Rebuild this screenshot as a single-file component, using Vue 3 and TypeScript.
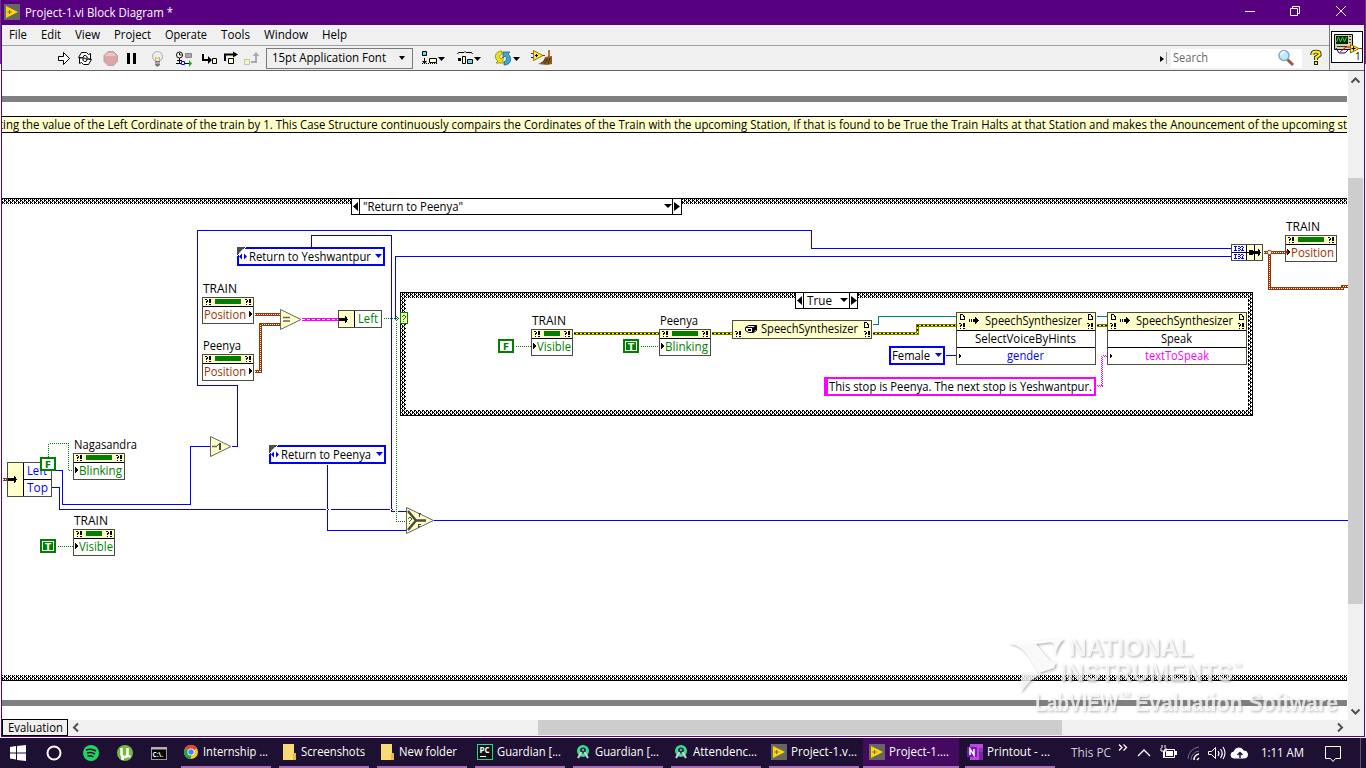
<script setup lang="ts">
import { h } from 'vue'

/** Label whose glyphs are fitted to a given advance width. */
const Fit = (p: { t: string; w: number; s?: number; c?: string }) =>
  h('svg', { width: p.w, height: 18, style: 'display:block;overflow:visible;flex:none' }, [
    h('text', { x: 0, y: 13, 'font-size': p.s ?? 12, fill: p.c ?? '#000', textLength: p.w, lengthAdjust: 'spacingAndGlyphs' }, p.t),
  ])
Fit.props = ['t', 'w', 's', 'c']

/** Turns rows of a bitmap into a path of unit squares. */
function px(rows: string, x = 0, y = 0): string {
  let d = ''
  rows.split('/').forEach((r, j) =>
    [...r].forEach((c, i) => { if (c === '#') d += `M${x + i} ${y + j}h1v1h-1z` }))
  return d
}
const ERR = '##..##/..#.##/.##.##/.#..##/....../.#..##'
const DOC = '###../#..#./#..##/#...#/#...#/#####'
const ARROW = '......#..../......##.../#.#.#####../#.#.######./#.#.#####../......##.../......#....'
const BIGARROW = '......#.../......##../########./#########/########./......##../......#...'

interface Prop { x: number; y: number; w: number; name: string; nw: number; field: string; fw: number; color: string; out?: boolean }
const props: Prop[] = [
  { x: 202, y: 297, w: 52, name: 'TRAIN', nw: 34, field: 'Position', fw: 42, color: '#993300', out: true },
  { x: 202, y: 354, w: 52, name: 'Peenya', nw: 38, field: 'Position', fw: 42, color: '#993300', out: true },
  { x: 73, y: 453, w: 52, name: 'Nagasandra', nw: 63, field: 'Blinking', fw: 43, color: '#007f00' },
  { x: 73, y: 529, w: 42, name: 'TRAIN', nw: 34, field: 'Visible', fw: 34, color: '#007f00' },
  { x: 531, y: 329, w: 42, name: 'TRAIN', nw: 34, field: 'Visible', fw: 34, color: '#007f00' },
  { x: 659, y: 329, w: 52, name: 'Peenya', nw: 38, field: 'Blinking', fw: 43, color: '#007f00' },
  { x: 1285, y: 235, w: 52, name: 'TRAIN', nw: 34, field: 'Position', fw: 43, color: '#993300' },
]
const consts = [
  { x: 40, y: 457, v: 'F' }, { x: 40, y: 539, v: 'T' },
  { x: 498, y: 339, v: 'F' }, { x: 623, y: 339, v: 'T' },
]
const enums = [
  { x: 237, y: 247, w: 148, t: 'Return to Yeshwantpur', tw: 122 },
  { x: 269, y: 445, w: 117, t: 'Return to Peenya', tw: 90 },
]
const methods = [
  { x: 956, m: 'SelectVoiceByHints', mx: 975, mw: 101, p: 'gender', px: 1007, pw: 37, c: '#0000ff' },
  { x: 1107, m: 'Speak', mx: 1161, mw: 31, p: 'textToSpeak', px: 1145, pw: 64, c: '#ff00ff' },
]
const blue = [
  'M231 446H237V385H197V230H811V248H1231', 'M311 247V235H391V511H406', 'M1231 256H395V509H59V487H51',
  'M51 470H62V504H190V446H210', 'M327 464V530H406', 'M433 520H1347',
]
const outerDots = ['M48 456V443H68V470H73', 'M57 546H73', 'M383 318H394', 'M396 322V521H406']
const innerDots = ['M515 346H531', 'M640 346H659']
const brown = ['M254 314H280', 'M254 371H260V324H280', 'M1263 252H1285', 'M1269 253V288H1342V286H1347', 'M2 479H7']
const yellow = ['M573 333H659', 'M711 333H732', 'M872 333H917V325H956', 'M1096 325H1107']

const menus = [['File', 18, 9], ['Edit', 20, 41], ['View', 25, 75], ['Project', 37, 114], ['Operate', 42, 165], ['Tools', 29, 221], ['Window', 44, 264], ['Help', 25, 322]] as [string, number, number][]
const menuItems = menus.map((m, i) => ({ t: m[0], w: m[1], gap: i ? m[2] - menus[i - 1][2] - menus[i - 1][1] : 7 }))

const tasks = [
  { k: 'chrome', t: 'Internship ...', w: 65 }, { k: 'folder', t: 'Screenshots', w: 64 },
  { k: 'folder', t: 'New folder', w: 58 }, { k: 'pc', t: 'Guardian [...', w: 64 },
  { k: 'as', t: 'Guardian [...', w: 64 }, { k: 'as', t: 'Attendenc...', w: 64 },
  { k: 'lv', t: 'Project-1.v...', w: 66 }, { k: 'lv', t: 'Project-1....', w: 60, on: true },
  { k: 'on', t: 'Printout - ...', w: 63 },
]
</script>

<template>
  <div class="screen">
    <div class="win">
      <header class="title">
        <svg width="16" height="16"><rect width="16" height="16" fill="#666" /><path d="M2 2L14 8L2 14z" fill="#ffd500" /><path d="M3.500 8h4M5.500 6v4" stroke="#666" /></svg>
        <Fit t="Project-1.vi Block Diagram *" :w="148" c="#fff" />
        <svg class="controls" width="120" height="25" fill="none" stroke="#fff">
          <path d="M10 11.500h10M55.500 8.500h7v7h-7zM57.500 8V6.500h7v7H63M101 6l10 10M111 6L101 16" />
        </svg>
      </header>
      <div class="bars">
        <div class="barcol">
          <nav class="menu">
            <span v-for="m in menuItems" :key="m.t" :style="{ marginLeft: m.gap + 'px' }"><Fit :t="m.t" :w="m.w" /></span>
          </nav>
          <div class="tools">
            <svg class="toolicons" width="264" height="24" viewBox="2 46 264 24">
              <path d="M58.500 56.500h5v-4l6 6l-6 6v-4h-5z" fill="#fff" stroke="#000" />
              <g fill="#fff" stroke="#000"><path d="M78.500 57.500l3-5h5l2 2l2-1v5.500h-5l2-2l-2-1.500h-1.500l-1.500 2.500z" /><path d="M91.500 59.500l-3 5h-5l-2-2l-2 1V58h5l-2 2l2 1.500h1.500l1.500-2.500z" /></g>
              <path d="M108 51.500h5.500l4 4v6l-4 4H108l-4-4v-6z" fill="#dda5a5" stroke="#b3a4a4" />
              <path d="M107 53h7l2 3H105z" fill="#edc4c4" />
              <path d="M127 53h3v11h-3zM133 53h3v11h-3z" />
              <g><circle cx="157.500" cy="56.500" r="5" fill="#eee" stroke="#aaa" /><path d="M155.500 62v-5l2 2l2-2v5" fill="none" stroke="#e2b64c" /><path d="M155 61h5v4l-2.500 2l-2.500-2z" fill="#777" /><path d="M155 63h5" stroke="#ddd" /></g>
              <g fill="none" stroke="#000"><circle cx="179.500" cy="55" r="3" fill="#fff" /><path d="M179.500 53v2h2M179.500 58v5M177 60.500h5M176 63.500h5M184 63.500h5" /><path d="M185.500 53.500h6v4h-6z" fill="#aaa" stroke="#888" /><path d="M181.500 61.500h3v3h-3z" fill="#fff" stroke="#00f" /><path d="M189 60v7l3-3.500z" fill="#0b0" stroke="none" /></g>
              <path d="M202 54h2v5h4v-3l4 4l-4 4v-3h-6z" /><path d="M212.500 58.500h4v5h-4z" fill="#ffc" stroke="#000" />
              <path d="M225 61v-6.500h8" fill="none" stroke="#000" stroke-width="2" /><path d="M233 51.500v6l5-3z" /><path d="M228.500 58.500h5v5h-5z" fill="#ffc" stroke="#000" />
              <path d="M244.500 59.500h5v5h-5z" fill="#f5f3c8" stroke="#c8c6a0" /><path d="M251 63h6v-7h2.500l-3.500-4l-3.500 4h2.500v5h-4z" fill="#aaa" />
            </svg>
            <div class="font"><Fit t="15pt Application Font" :w="114" /><i /></div>
            <svg width="150" height="24" viewBox="412 46 150 24">
              <path d="M421.500 51.500h4v4h-4z" fill="#5ce0ee" stroke="#000" /><path d="M423 58h1v3h2l-2.500 3l-2.500-3h2z" /><path d="M421 63.500h15" stroke="#000" stroke-dasharray="1 1" /><path d="M428.500 58.500h7v4h-7z" fill="#ffc" stroke="#000" />
              <path d="M437 57h7l-3.500 4zM473 57h7l-3.500 4zM512 57h7l-3.500 4z" />
              <path d="M456.500 54l1-1.500h5.500l1-1l1 1h5.500l1 1.500" fill="none" stroke="#000" /><path d="M457 58h3v3h-3z" /><path d="M461.500 56.500h3v7h-3z" fill="#ffc" stroke="#000" /><path d="M466.500 59.500h5v4h-5z" fill="#5ce0ee" stroke="#000" />
              <path d="M501 51c-8 0-8 8-4 10l-2 2h7v-6l-2 2c-2-2-1-4 1-5z" fill="#e7e21c" stroke="#8c8614" stroke-width=".8" /><path d="M503 65c8 0 8-8 4-11l2-2h-7v6l2-2c2 2 2 4-1 6z" fill="#3fa6c8" stroke="#256178" stroke-width=".8" />
              <path d="M530 53.500h3" stroke="#d00" /><path d="M530 57.500h3" stroke="#00d" /><path d="M539 55.500h5" stroke="#d00" /><path d="M532.500 50.500L542 55.500L532.500 60.500z" fill="#ffe92c" stroke="#887a00" /><path d="M534 55.500h3M535.500 54v3" stroke="#000" /><path d="M547 50h2v7h-2z" fill="#b3792b" /><path d="M544 57l7-1v8l-5 1l-9-1l5-2z" fill="#8b5b20" /><path d="M540 63l6-4M543 64l4-5M547 64l2-6" stroke="#473112" />
            </svg>
            <div class="spacer" />
            <svg width="11" height="24" viewBox="1158 46 11 24"><path d="M1160 56v6l4-3z" /><path d="M1166.500 52v12" stroke="#999" /></svg>
            <div class="search"><Fit t="Search" :w="35" c="#666" />
              <svg width="18" height="18"><path d="M10 10l6 6" stroke="#9b5b3c" stroke-width="3" /><circle cx="7" cy="6.500" r="5" fill="#c4e8fa" stroke="#83acc9" stroke-width="1.500" /><path d="M4 6a3 3 0 0 1 4-3" fill="none" stroke="#fff" stroke-width="1.500" /></svg>
            </div>
            <svg class="help" width="14" height="18"><path d="M3.500 6V4.500c0-2.500 7-2.500 7 0v1.500L7 8.500V11" fill="none" stroke="#222" stroke-width="4" /><path d="M3.500 6V4.500c0-2.500 7-2.500 7 0v1.500L7 8.500V11" fill="none" stroke="#ffee00" stroke-width="2.200" /><rect x="5.500" y="12.500" width="3" height="3" fill="#fe0" stroke="#222" /></svg>
          </div>
        </div>
        <div class="vi">
          <svg width="32" height="32"><rect x=".5" y=".5" width="31" height="31" fill="#fff" stroke="#000" />
            <path d="M3.500 3.500h18v15h-18z" fill="#d5d0a5" stroke="#000" /><rect x="5" y="5" width="12" height="8" fill="#021" /><path d="M5.500 11l2-5l2 5l2-5l2 5l2-5" fill="none" stroke="#2d2" /><path d="M18 5.500h2M18 8.500h2M18 11.500h2M6 15.500h10" stroke="#333" />
            <path d="M5 17l3 5h6l4-4" fill="none" stroke="#00a" /><path d="M9 21l6-5h4M27 17.500h4" fill="none" stroke="#e00" /><path d="M19.500 13.500L28 17.500l-8.500 4.500z" fill="#fe3" stroke="#986500" /><path d="M20.500 17.500h4M22.500 15.500v4" stroke="#000" /><text x="24" y="29" font-size="10">1</text>
          </svg>
        </div>
      </div>

      <div class="work">
        <svg class="diagram" width="1346" height="649" viewBox="2 71 1346 649" shape-rendering="crispEdges">
          <defs>
            <pattern id="weave" width="4" height="4" patternUnits="userSpaceOnUse"><rect width="4" height="4" fill="#fff" /><path :d="px('##../#.#./..##/#.#.')" /></pattern>
            <filter id="emboss" x="-5%" y="-10%" width="110%" height="130%"><feDropShadow dx="1.200" dy="1.200" stdDeviation="0.800" flood-color="#777" flood-opacity=".7" /></filter>
          </defs>
          <path d="M2 96h1345v6H2zM2 700h1345v6H2z" fill="#808080" />
          <rect x="2" y="116" width="1345" height="17" /><rect x="2" y="117" width="1345" height="15" fill="#ffffcc" />
          <text x="-1" y="129" textLength="1348" lengthAdjust="spacingAndGlyphs">ting the value of the Left Cordinate of the train by 1. This Case Structure continuously compairs the Cordinates of the Train with the upcoming Station, If that is found to be True the Train Halts at that Station and makes the Anouncement of the upcoming st</text>

          <rect x="2" y="198" width="1345" height="6" fill="url(#weave)" /><rect x="2" y="198" width="1345" height="1" />
          <rect x="2" y="675" width="1345" height="6" fill="url(#weave)" /><rect x="2" y="680" width="1345" height="1" />

          <g transform="translate(.5 .5)" fill="none">
            <path v-for="(d, i) in blue" :key="i" :d="d" stroke="#0000ff" />
            <path d="M389 509H391M392 509H394M325 509H327M328 509H330" stroke="#fff" />
            <path d="M396 319V520" stroke="#fff" stroke-width="3" />
            <path v-for="(d, i) in outerDots" :key="'d' + i" :d="d" stroke="#007f00" stroke-dasharray="1 1" />
            <g v-for="(d, i) in brown" :key="'b' + i"><path :d="d" stroke="#993300" stroke-width="3" /><path :d="d" stroke="#fff" stroke-dasharray="1 1" /></g>
            <path d="M301 319H338" stroke="#ff00ff" stroke-width="3" /><path d="M301 319H338" stroke="#fff" stroke-dasharray="3 2" />
          </g>

          <rect x="400" y="292" width="853" height="124" /><rect x="401" y="293" width="851" height="122" fill="url(#weave)" /><rect x="406" y="298" width="842" height="112" fill="#fff" />
          <g transform="translate(.5 .5)" fill="none">
            <path v-for="d in innerDots" :key="d" :d="d" stroke="#007f00" stroke-dasharray="1 1" />
            <g v-for="(d, i) in yellow" :key="'y' + i"><path :d="d" stroke="#7f7f00" stroke-width="3" /><path :d="d" stroke="#ffff00" /><path :d="d" stroke="#000" stroke-dasharray="2 2" /></g>
            <path d="M872 324H878V316H956M1096 316H1107" stroke="#007f7f" /><path d="M945 355H956" stroke="#0000ff" />
            <path d="M1096 385H1101V355H1107" stroke="#ff00ff" stroke-dasharray="1 1" /><path d="M1096 386H1102V356H1107" stroke="#ff00ff" stroke-dasharray="1 1" stroke-dashoffset="1" />
          </g>

          <!-- case selectors -->
          <path d="M351.500 198.500h330v16h-330zM359.500 198v16M672.500 198v16" fill="#fff" stroke="#000" />
          <path d="M358 202v9l-5-4.500zM674 202v9l6-4.500zM664 204h8l-4 4z" shape-rendering="auto" />
          <text x="363" y="211" textLength="100" lengthAdjust="spacingAndGlyphs">"Return to Peenya"</text>
          <path d="M795.500 292.500h62v16h-62zM803.500 292v16M849.500 292v16" fill="#fff" stroke="#000" />
          <path d="M802 296v9l-5-4.500zM851 296v9l6-4.500zM840 298h8l-4 4z" shape-rendering="auto" />
          <text x="807" y="305" textLength="25" lengthAdjust="spacingAndGlyphs">True</text>

          <!-- unbundle -->
          <rect x="7.500" y="462.500" width="44" height="34" fill="#fff" stroke="#4c4c3c" /><rect x="8" y="463" width="15" height="33" fill="#ffffcc" /><path d="M23.500 463v33M24 479.500h27" stroke="#000" />
          <path :d="px(BIGARROW, 8, 476)" />
          <g fill="#0000ff"><text x="27" y="475" textLength="20" lengthAdjust="spacingAndGlyphs">Left</text><text x="27" y="492" textLength="21" lengthAdjust="spacingAndGlyphs">Top</text></g>
          <rect x="338.500" y="310.500" width="43" height="17" fill="#fff" stroke="#4c4c3c" /><rect x="339" y="311" width="15" height="16" fill="#ffffcc" /><path d="M354.500 311v16" stroke="#000" /><path :d="px(BIGARROW, 339, 316)" />
          <text x="358" y="323" fill="#007f00" textLength="20" lengthAdjust="spacingAndGlyphs">Left</text>
          <path :d="px('..#../.#.#./#.#.#/.#.#./..#..', 394, 316)" fill="#007f00" />
          <rect x="400.500" y="312.500" width="7" height="11" fill="#ffffb0" stroke="#007f00" /><path :d="px('.##./#..#/...#/..#./.#../..../.#..', 402, 315)" fill="#007f00" />

          <!-- property nodes -->
          <g v-for="(n, i) in props" :key="'n' + i" :transform="`translate(${n.x} ${n.y})`">
            <text x="1" y="-4" :textLength="n.nw" lengthAdjust="spacingAndGlyphs">{{ n.name }}</text>
            <rect x=".5" y=".5" :width="n.w - 1" height="26" fill="#fff" stroke="#4c4c3c" /><rect x="1" y="1" :width="n.w - 2" height="8" fill="#ffffcc" /><rect x="1" y="9" :width="n.w - 2" height="1" />
            <rect x="13" y="2" :width="n.w - 26" height="5" fill="#007f00" />
            <path :d="px(ERR, 3, 2) + px(ERR, n.w - 9, 2)" />
            <path :d="px('#.../##../###./###./##../#...', n.out ? 47 : 2, 14)" />
            <text :x="n.out ? 2 : 6" y="22" :fill="n.color" :textLength="n.fw" lengthAdjust="spacingAndGlyphs">{{ n.field }}</text>
          </g>
          <circle cx="1287" cy="252" r="1.600" fill="#e00" shape-rendering="auto" /><circle cx="1269.500" cy="252.500" r="2.200" fill="#fff" stroke="#993300" shape-rendering="auto" />

          <!-- boolean constants -->
          <g v-for="(c, i) in consts" :key="'c' + i" :transform="`translate(${c.x} ${c.y})`">
            <rect x="1" y="1" width="14" height="12" :fill="c.v === 'F' ? '#fff' : '#007f00'" stroke="#007f00" stroke-width="2" />
            <rect v-if="c.v === 'T'" x="2.500" y="2.500" width="11" height="9" fill="none" stroke="#fff" />
            <text class="bool" x="8" y="10.500" :fill="c.v === 'F' ? '#007f00' : '#fff'">{{ c.v }}</text>
          </g>

          <!-- enum constants -->
          <g v-for="(e, i) in enums" :key="'e' + i" :transform="`translate(${e.x} ${e.y})`">
            <rect x="1" y="1" :width="e.w - 2" height="17" fill="#fff" stroke="#0000ff" stroke-width="2" />
            <path d="M0 0h8L0 8z" fill="#4c4c4c" shape-rendering="auto" /><path d="M8 0h1L0 9v-1z" fill="#fff" />
            <path d="M2 9.500l3-3v6zM10 9.500l-3-3v6z" fill="#0000ff" shape-rendering="auto" />
            <text x="12" y="14" :textLength="e.tw" lengthAdjust="spacingAndGlyphs">{{ e.t }}</text>
            <path :d="`M${e.w - 10} 7h7l-3.500 4z`" fill="#0000ff" shape-rendering="auto" />
          </g>
          <rect x="890" y="347" width="54" height="17" fill="#fff" stroke="#0000ff" stroke-width="2" />
          <text x="892" y="360" textLength="38" lengthAdjust="spacingAndGlyphs">Female</text><path d="M935 353h7l-3.500 4z" fill="#00f" shape-rendering="auto" />
          <rect x="824" y="377" width="272" height="19" fill="#ff00ff" /><rect x="828" y="379" width="266" height="15" fill="#fff" />
          <text x="829" y="391" textLength="263" lengthAdjust="spacingAndGlyphs">This stop is Peenya. The next stop is Yeshwantpur.</text>

          <!-- functions -->
          <g shape-rendering="auto" fill="#ffffcc" stroke="#66665a">
            <path d="M280.500 309.500v20l20.500-10z" /><path d="M210.500 436.500v20l20.500-10z" /><path d="M406.500 507.500v26l27-13z" />
            <path d="M283 317.500h7M283 321h7M212 446.500h5" stroke-width="1.500" /><path d="M408 511l8 9.500h10M408 530l8-9.500" fill="none" stroke="#4c4c3c" stroke-width="2.500" />
          </g>
          <path :d="px('..#/.##/#.#/..#/..#/..#/..#', 217, 443) + px('..#/.##/..#/..#/..#/..#/..#', 218, 443)" fill="#4c4c3c" />
          <path :d="px('.##./#..#/...#/..#./.#../..../.#..', 408, 517)" fill="#4c4c3c" />
          <path :d="px('###/.#./.#./.#.', 418, 513) + px('###/#../##./#..', 418, 524)" fill="#4c4c3c" />

          <!-- .NET nodes -->
          <rect x="732.500" y="320.500" width="139" height="18" fill="#ffffcc" stroke="#4c4c3c" />
          <path :d="px(ERR, 735, 331) + px(ERR, 864, 331) + px(DOC, 864, 322)" />
          <path d="M745.500 327.500l3-2h8v5l-3 2h-5l-3-2zM746 327.500h6.500v4.500M752.500 328l4-2.500" fill="#fff" stroke="#000" shape-rendering="auto" /><path d="M753 328l3-2v4l-3 2z" /><path d="M748 329h3v2h-3z" />
          <text x="761" y="333" textLength="97" lengthAdjust="spacingAndGlyphs">SpeechSynthesizer</text>
          <g v-for="m in methods" :key="m.x">
            <rect :x="m.x + .5" y="312.500" width="139" height="52" fill="#fff" stroke="#4c4c3c" /><rect :x="m.x + 1" y="313" width="138" height="17" fill="#ffffcc" />
            <path :d="`M${m.x + 1} 330h138v1h-138zM${m.x + 1} 347h138v1h-138z` + px('#./##/##/#.', m.x + 3, 354)" />
            <path :d="px(DOC, m.x + 4, 314) + px(ERR, m.x + 3, 323) + px(ARROW, m.x + 13, 317) + px(DOC, m.x + 132, 314) + px(ERR, m.x + 131, 323)" />
            <text :x="m.x + 29" y="325" textLength="97" lengthAdjust="spacingAndGlyphs">SpeechSynthesizer</text>
            <text :x="m.mx" y="343" :textLength="m.mw" lengthAdjust="spacingAndGlyphs">{{ m.m }}</text>
            <text :x="m.px" y="360" :fill="m.c" :textLength="m.pw" lengthAdjust="spacingAndGlyphs">{{ m.p }}</text>
          </g>

          <!-- bundle -->
          <rect x="1231.500" y="244.500" width="31" height="16" fill="#ffffcc" stroke="#4c4c3c" /><rect x="1232" y="245" width="14" height="15" fill="#fff" />
          <path d="M1246.500 245v15M1254.500 245v15M1232 252.500h14" stroke="#000" />
          <path :d="px(BIGARROW, 1252, 249)" /><path d="M1247 252h7v1h-7zM1249 250h4v5h-4z" />
          <path :d="px('###.##.##./.#....#..#/.#..##..#./.#....#.#./###.##.###', 1234, 246) + px('###.##.##./.#....#..#/.#..##..#./.#....#.#./###.##.###', 1234, 254)" fill="#0000ff" />

          <!-- evaluation watermark -->
          <g class="mark" filter="url(#emboss)" shape-rendering="auto">
            <path d="M1008 643q12 2 19 11l12 19l15-5l2-5q-6-1-10-7l-10-12l9-1q8-2 9 2l1 11q2-11 9-17h-5" fill-opacity=".9" />
            <path d="M1021 692q-1-10 1-20l17 2q8-1 17-5q-16 4-26 12z" />
            <text x="1069" y="656" font-size="24" textLength="124" lengthAdjust="spacingAndGlyphs">NATIONAL</text>
            <text x="1060" y="681" font-size="24" textLength="173" lengthAdjust="spacingAndGlyphs">INSTRUMENTS</text><text x="1234" y="667" font-size="5">TM</text>
            <text x="1035" y="711" font-size="24" textLength="83" lengthAdjust="spacingAndGlyphs">LabVIEW</text>
            <text x="1120" y="697" font-size="7">TM</text>
            <text x="1135" y="711" font-size="24" textLength="203" lengthAdjust="spacingAndGlyphs">Evaluation Software</text>
          </g>
        </svg>
        <div class="vbar"><svg width="15" height="20"><path d="M3.500 11.500l4-4l4 4" /></svg><div class="vthumb" /><div class="spacer" /><svg width="15" height="18"><path d="M3.500 7.500l4 4l4-4" /></svg></div>
      </div>
      <footer class="bottom">
        <div class="eval"><Fit t="Evaluation" :w="55" /></div>
        <svg width="20" height="15"><path d="M10 3.500l-4 4l4 4" /></svg>
        <div class="hthumb" /><div class="spacer" />
        <svg width="15" height="15"><path d="M4 3.500l4 4l-4 4" /></svg>
        <div class="corner" />
      </footer>
    </div>

    <div class="taskbar">
      <svg class="pins" width="181" height="30" viewBox="0 738 181 30">
        <path d="M10 747l6-1v6.500h-6zM17 746l9-1v7.500h-9zM10 753.500h6v6l-6-1zM17 753.500h9v7.500l-9-1z" fill="#fff" />
        <circle cx="54" cy="753" r="6.500" fill="none" stroke="#fff" stroke-width="2" />
        <circle cx="91" cy="753" r="8" fill="#1ed760" /><path d="M86 750q5-2 10 1M87 753q4-1.500 8 1M87.500 756q3-1 6 1" stroke="#1e1033" stroke-width="1.500" fill="none" />
        <circle cx="125" cy="753" r="8" fill="#76b83f" /><path d="M121.500 748v6c0 4 6 4 6 0v-6v6q0 3 3 2M122.500 755v5" fill="none" stroke="#fff" stroke-width="2.500" />
        <rect x="151.500" y="747.500" width="15" height="12" fill="#000" stroke="#999" /><path d="M151 748.500h16" stroke="#bbb" stroke-width="2" /><text x="152.500" y="757" font-size="6.500" fill="#fff" font-weight="bold">C:\.</text>
      </svg>
      <div v-for="(t, i) in tasks" :key="i" class="task" :class="{ on: t.on }">
        <svg v-if="t.k === 'chrome'" width="16" height="16" viewBox="0 0 16 16"><circle cx="8" cy="8" r="7" fill="#f7c51e" /><path d="M2 4.300a7 7 0 0 1 12 0L8 8z" fill="#e24435" /><path d="M1.900 4.500a7 7 0 0 0 5.600 10.500L9 9z" fill="#299d52" /><circle cx="8" cy="8" r="3.500" fill="#fff" /><circle cx="8" cy="8" r="2.700" fill="#3f82ef" /></svg>
        <svg v-else-if="t.k === 'folder'" width="16" height="16"><path d="M2 0h11v9h2v7H2z" fill="#f9da74" /><path d="M13 9h2v7h-3v-6z" fill="#e5b94d" /></svg>
        <svg v-else-if="t.k === 'pc'" width="16" height="16"><rect x=".5" y=".5" width="15" height="15" fill="#111" stroke="#21d789" /><text x="2.500" y="9" font-size="8" font-weight="bold" fill="#fff">PC</text><path d="M3 12.500h6" stroke="#fff" /></svg>
        <svg v-else-if="t.k === 'as'" width="16" height="16"><circle cx="8" cy="7" r="6" fill="#3ddc84" /><circle cx="8" cy="6.500" r="3" fill="#17344b" /><circle cx="8" cy="6" r="1" fill="#9ce" /><path d="M6.500 8L3 14M9.500 8l3.500 6" stroke="#c5d6df" stroke-width="2" /></svg>
        <svg v-else-if="t.k === 'lv'" width="16" height="16"><rect width="16" height="16" fill="#666" /><path d="M2 2L14 8L2 14z" fill="#ffd500" /><path d="M3.500 8h4M5.500 6v4" stroke="#666" /></svg>
        <svg v-else width="16" height="16"><rect x="3" width="13" height="16" fill="#b64bd8" /><path d="M12 4h4v4h-4z" fill="#9332bf" /><path d="M12 8h4v8h-4z" fill="#7823a5" /><rect y="3" width="10" height="10" fill="#7719aa" /><path d="M3 11V5l4 6V5" fill="none" stroke="#fff" stroke-width="1.500" /></svg>
        <Fit :t="t.t" :w="t.w" c="#fff" />
      </div>
      <div class="thispc"><Fit t="This PC" :w="40" c="#d2cfd8" /></div>
      <svg width="148" height="30" viewBox="1112 738 148 30" fill="none" stroke="#fff">
        <path d="M1119 744.500l3 3l-3 3M1123.500 744.500l3 3l-3 3" stroke-width="1.300" /><path d="M1138 756l6-6l6 6" stroke-width="1.300" />
        <path d="M1164.500 749.500h10v8h-10z" /><path d="M1166 751h7v5h-7zM1175 751h2v4h-2z" fill="#fff" stroke="none" /><path d="M1161 748v3h5v-3M1163.500 751v7M1162 745v3M1165 745v3" />
        <path d="M1188 759a12 12 0 0 1 11-12M1191 760a9 9 0 0 1 8-9" stroke="#777187" /><path d="M1194 760a6 6 0 0 1 5-6M1197 760l2-2" stroke-width="1.500" />
        <path d="M1208.500 751.500h3l4-4v11l-4-4h-3z" /><path d="M1218 751q2 2.500 0 5M1220.500 749q3.500 4.500 0 9M1223 747q4 6 0 12" stroke-width="1.100" />
        <path d="M1236 758h-2a3 3 0 0 1 0-6a5 5 0 0 1 9.500-1a3.500 3.500 0 0 1 1 7z" fill="#fff" /><path d="M1240 758v-5M1237.500 755l2.500-2.500l2.500 2.500" stroke="#1e1033" stroke-width="1.500" />
      </svg>
      <div class="clock"><Fit t="1:11 AM" :w="43" c="#fff" /></div>
      <svg class="note" width="20" height="30"><path d="M1.500 8.500h15v12h-5l-2.500 3l-2.500-3h-5z" fill="none" stroke="#fff" /></svg>
      <div class="edge" />
    </div>
  </div>
</template>

<style>
body { margin: 0; overflow: hidden; }
</style>

<style scoped>
.screen { width: 1366px; height: 768px; overflow: hidden; background: linear-gradient(#6b3480 64px, #fff 64px); font: 12px "Open Sans", "Noto Sans", sans-serif; display: flex; flex-direction: column; }
.win { box-sizing: border-box; width: 1364px; height: 737px; margin: 0 0 1px 1px; border: solid #5a0080; border-width: 0 1px 1px; display: flex; flex-direction: column; background: #f0f0f0; }
.title { height: 25px; flex: none; background: #570080; display: flex; align-items: center; margin: 0 -1px; padding-left: 3px; gap: 5px; }
.title > svg:first-child { margin-top: -2px; }
.controls { margin-left: auto; margin-right: 10px; }
.bars { display: flex; height: 46px; flex: none; }
.barcol { flex: 1; border-right: 1px solid #777; }
.menu { display: flex; height: 20px; border-bottom: 1px solid #a0a0a0; align-items: center; }
.tools { display: flex; height: 24px; align-items: center; border-bottom: 1px solid #646464; }
.tools > svg { flex: none; }
.font { box-sizing: border-box; width: 147px; height: 21px; border: 1px solid #7a7a7a; display: flex; align-items: center; padding-left: 5px; background: #f0f0f0; }
.font i { margin-left: 13px; border: 3.500px solid transparent; border-top: 4px solid #000; border-bottom: 0; }
.spacer { flex: 1; }
.search { display: flex; align-items: center; justify-content: space-between; box-sizing: border-box; height: 19px; width: 131px; background: #fff; padding: 0 7px 0 2px; margin-left: 2px; }
.help { margin: 0 6px 0 7px; }
.vi { box-sizing: border-box; width: 34px; padding: 6px 0 0 1px; border-bottom: 1px solid #646464; }
.vi svg { display: block; }
.work { display: flex; height: 649px; flex: none; }
.diagram { display: block; background: #fff; flex: none; }
.bool { font: bold 9px "DejaVu Sans", sans-serif; text-anchor: middle; }
.mark { fill: #fff; fill-opacity: .72; font-family: "Liberation Sans", sans-serif; font-weight: bold; }
.vbar { width: 15px; display: flex; flex-direction: column; }
.vbar svg path, .bottom > svg path { fill: none; stroke: #505050; stroke-width: 2; }
.vthumb { height: 426px; margin-top: 87px; background: #cdcdcd; }
.bottom { display: flex; height: 16px; flex: none; }
.eval { box-sizing: border-box; width: 66px; height: 17px; margin-top: -1px; border: 1px solid #000; display: flex; align-items: center; padding-left: 5px; }
.hthumb { width: 524px; height: 15px; margin-left: 450px; background: #cdcdcd; }
.corner { width: 15px; }
.taskbar { height: 30px; background: #1e1033; display: flex; }
.pins { flex: none; }
.task { box-sizing: border-box; width: 90px; height: 30px; margin-right: 8px; border-bottom: 2px solid #a56fb3; display: flex; align-items: center; gap: 4px; padding-left: 2px; flex: none; }
.task svg { flex: none; }
.task.on { width: 96px; margin-left: -4px; margin-right: 6px; padding-left: 6px; background: #430a5f; }
.thispc { margin-left: 8px; margin-right: 1px; display: flex; align-items: center; }
.clock { display: flex; align-items: center; padding-left: 1px; width: 62px; }
.note { margin-left: 1px; }
.edge { width: 1px; margin-left: 16px; background: #62596f; }
</style>
